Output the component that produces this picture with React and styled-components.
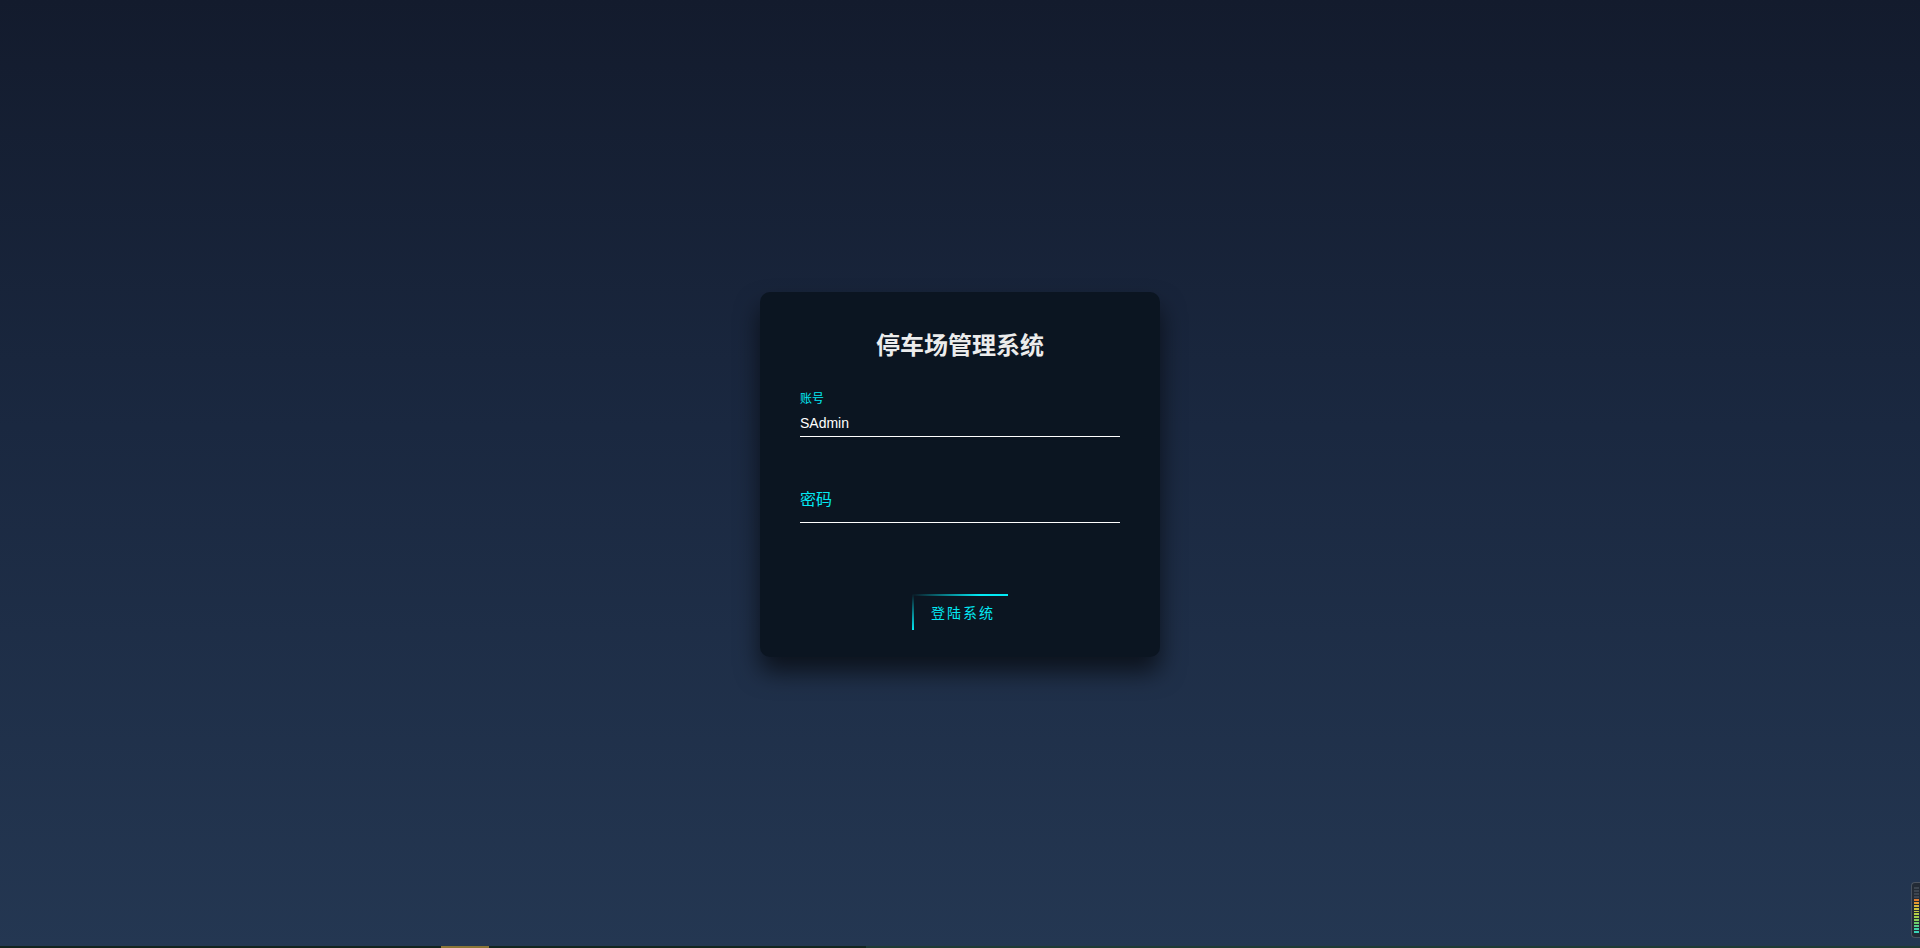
import React from "react";
import styled, { createGlobalStyle } from "styled-components";

const GlobalStyle = createGlobalStyle`
  html, body {
    margin: 0;
    padding: 0;
    height: 100%;
    overflow: hidden;
  }
  body {
    font-family: "Liberation Sans", "Noto Sans CJK SC", sans-serif;
    background: #243752;
  }
  * { box-sizing: border-box; }
`;

const Page = styled.div`
  position: relative;
  height: 100vh;
`;

const Main = styled.main`
  height: 100%;
  display: flex;
  align-items: center;
  justify-content: center;
  background: linear-gradient(180deg, #131b2d 0%, #1a2840 45%, #243752 100%);
`;

const BottomStrip = styled.div`
  position: absolute;
  left: 0;
  right: 0;
  bottom: 0;
  height: 2px;
  background: linear-gradient(
    90deg,
    #12241e 0px,
    #12241e 441px,
    #8a7636 441px,
    #8a7636 489px,
    #12261f 489px,
    #12261f 866px,
    #1f3b35 866px,
    #1f3b35 100%
  );
`;

const Card = styled.form`
  width: 400px;
  padding: 40px 40px 27px;
  background: #0b1521;
  border-radius: 10px;
  box-shadow: 0 15px 25px rgba(0, 0, 0, 0.6);
  display: flex;
  flex-direction: column;
`;

const Title = styled.h2`
  margin: 0 0 36px;
  padding: 0;
  font-family: "Noto Sans CJK SC", serif;
  font-size: 24px;
  line-height: 24px;
  font-weight: 600;
  color: #ececec;
  text-align: center;
`;

const SmallLabel = styled.label`
  display: block;
  font-family: "Noto Sans CJK SC", sans-serif;
  font-size: 12px;
  line-height: 12px;
  color: #03e9f4;
  margin-bottom: 9px;
`;

const TextInput = styled.input`
  display: block;
  width: 100%;
  height: ${(p) => 21 + p.$pad}px;
  padding: 0 0 ${(p) => p.$pad}px;
  margin: 0 0 ${(p) => p.$gap}px;
  border: none;
  border-bottom: 1px solid #ffffff;
  outline: none;
  background: transparent;
  color: #ffffff;
  font-family: "Liberation Sans", "Noto Sans CJK SC", sans-serif;
  font-size: 14px;
  line-height: 20px;

  &::placeholder {
    color: #03e9f4;
    opacity: 1;
    font-size: 16px;
    font-family: "Noto Sans CJK SC", sans-serif;
  }
`;

const ButtonRow = styled.div`
  display: flex;
  justify-content: center;
  margin-top: 71px;
`;

const LoginButton = styled.button`
  position: relative;
  width: 96px;
  height: 36px;
  padding: 0 10px 0 19px;
  border: none;
  background: transparent;
  color: #03e9f4;
  font-family: "Noto Sans CJK SC", sans-serif;
  font-size: 14px;
  line-height: 16px;
  letter-spacing: 2px;
  text-align: left;
  white-space: nowrap;
  cursor: pointer;

  &::before {
    content: "";
    position: absolute;
    top: 0;
    left: 0;
    width: 96px;
    height: 2px;
    background: linear-gradient(90deg, transparent 0%, #03e9f4 70%);
  }

  &::after {
    content: "";
    position: absolute;
    top: 0;
    left: 0;
    width: 2px;
    height: 36px;
    background: linear-gradient(180deg, transparent 0%, #03e9f4 100%);
  }
`;

const Meter = styled.div`
  position: fixed;
  right: 0;
  bottom: 10px;
  width: 9px;
  height: 56px;
  padding: 4px 0 4px 2px;
  background: #232b36;
  border: 1px solid #4a5360;
  border-right: none;
  border-radius: 4px 0 0 4px;
  display: flex;
  flex-direction: column;
  gap: 1px;
`;

const MeterBar = styled.span`
  display: block;
  width: 5px;
  height: 2px;
  background: ${(p) => p.$color};
`;

const meterColors = [
  "#3c4550",
  "#3c4550",
  "#3c4550",
  "#3c4550",
  "#e07a2c",
  "#e49a30",
  "#d8b83a",
  "#cfc63c",
  "#c4cc3e",
  "#b4cf44",
  "#a0d04c",
  "#86d058",
  "#6ecf6a",
  "#56d08a",
  "#44d2a6",
  "#3ad3b8",
];

export default function App() {
  return (
    <Page>
      <GlobalStyle />
      <Main>
        <Card onSubmit={(e) => e.preventDefault()}>
          <Title>停车场管理系统</Title>
          <SmallLabel htmlFor="account">账号</SmallLabel>
          <TextInput id="account" type="text" defaultValue="SAdmin" $pad={3} $gap={53} />
          <TextInput id="password" type="password" placeholder="密码" $pad={12} $gap={0} />
          <ButtonRow>
            <LoginButton type="submit">登陆系统</LoginButton>
          </ButtonRow>
        </Card>
      </Main>
      <BottomStrip />
      <Meter>
        {meterColors.map((c, i) => (
          <MeterBar key={i} $color={c} />
        ))}
      </Meter>
    </Page>
  );
}
